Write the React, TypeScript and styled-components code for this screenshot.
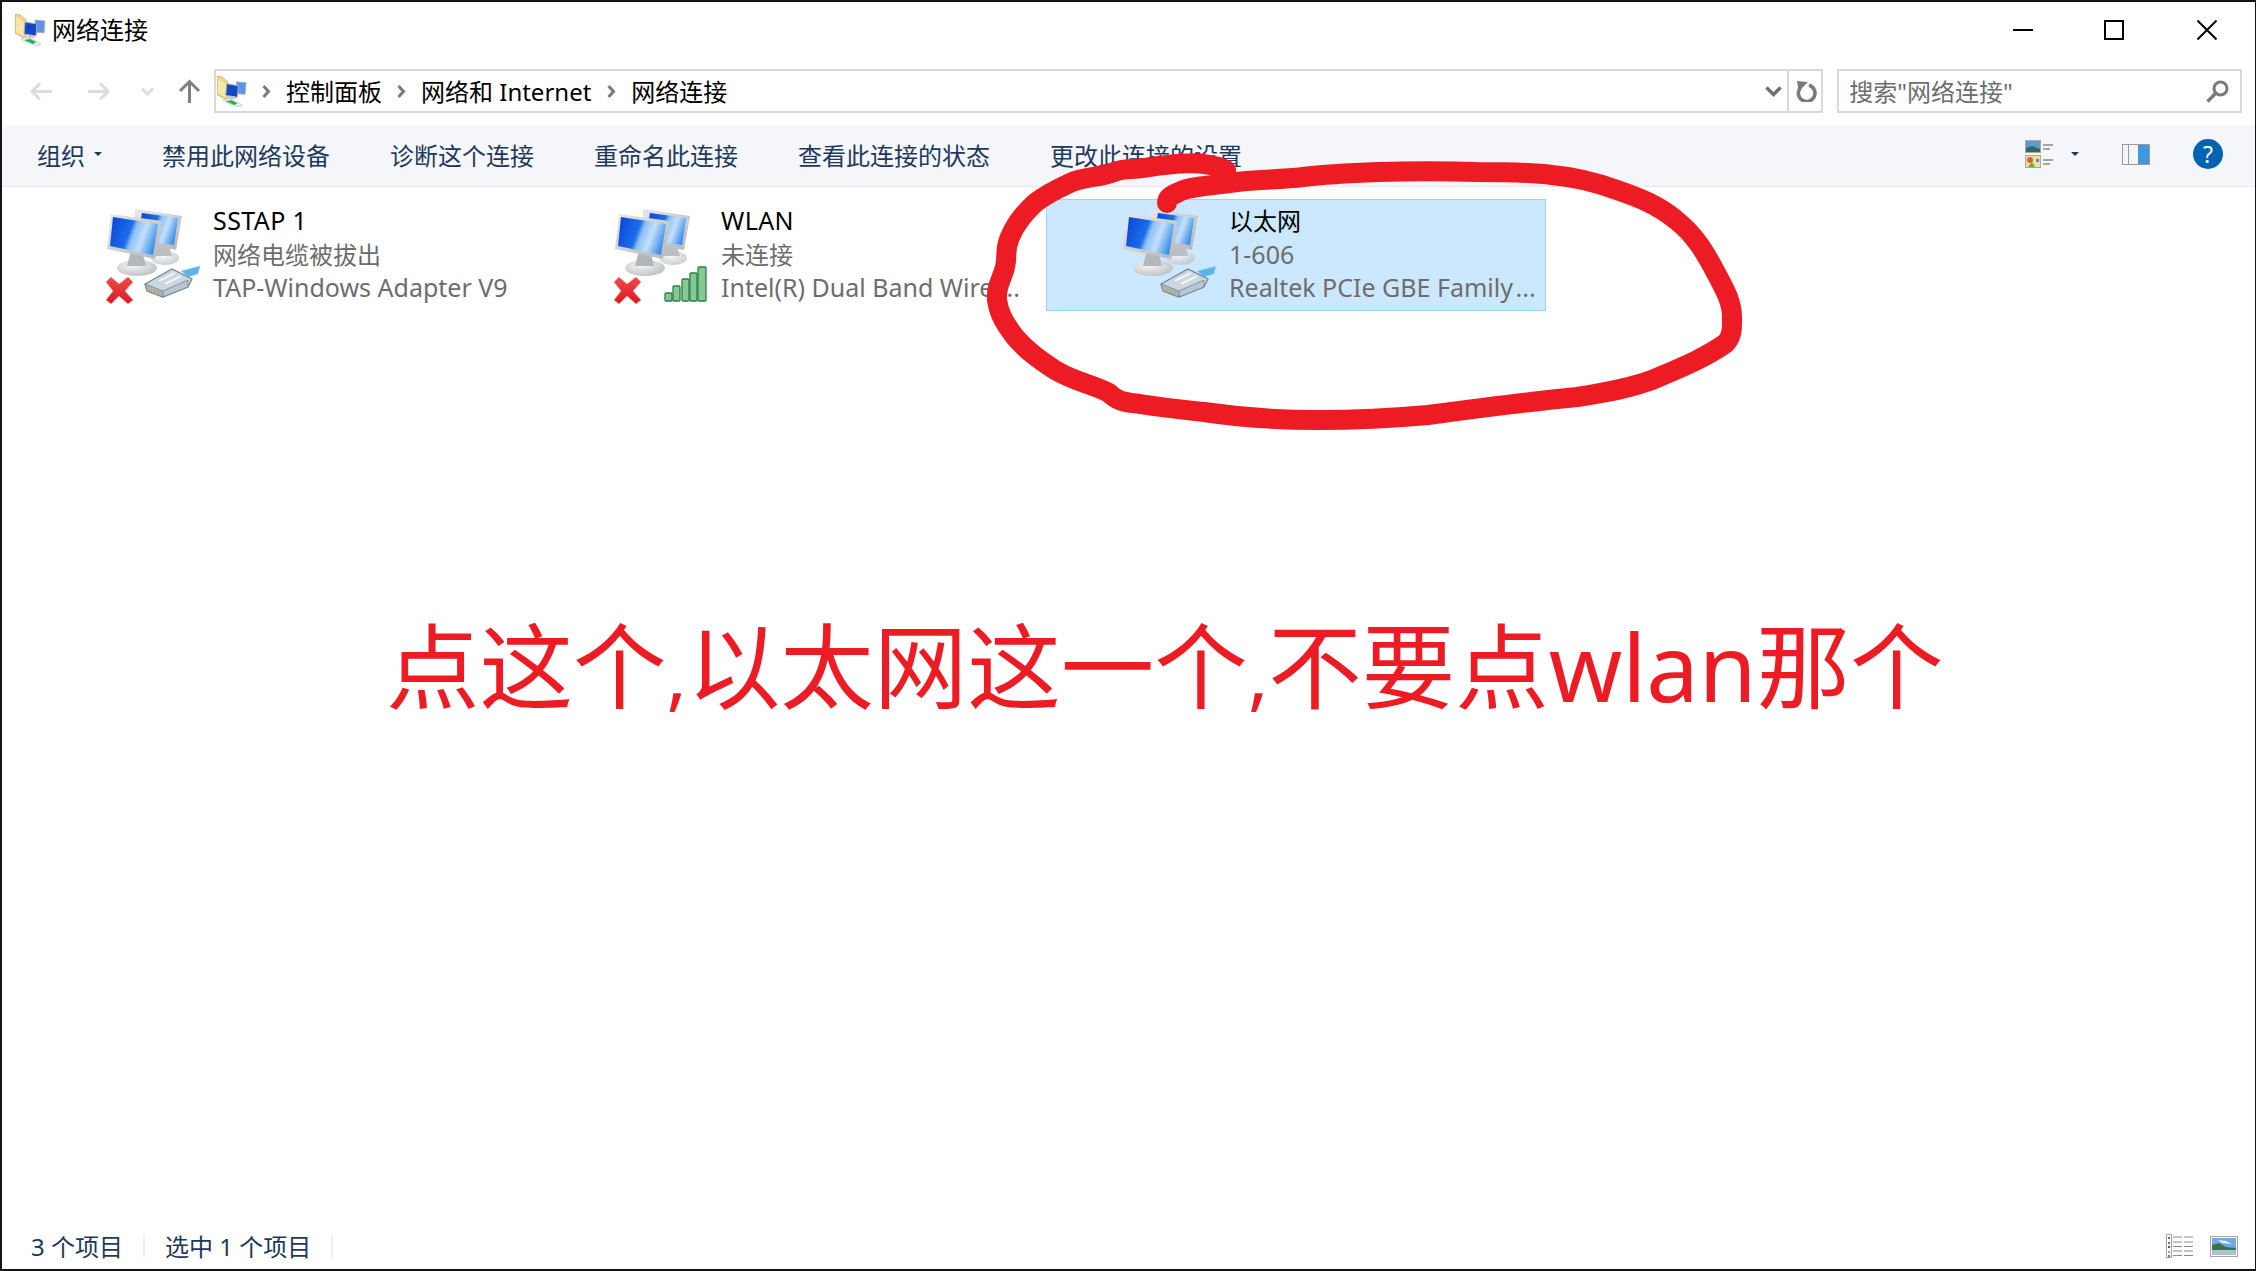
import { useId } from "react";
import styled, { createGlobalStyle } from "styled-components";

const GlobalStyle = createGlobalStyle`
	html, body {
		margin: 0;
		padding: 0;
		background: #fff;
		font-family: "Noto Sans", "Noto Sans CJK SC", sans-serif;
	}
`;

const Window = styled.div`
	position: relative;
	box-sizing: border-box;
	width: 2256px;
	height: 1271px;
	display: flex;
	flex-direction: column;
	overflow: hidden;
	background: #fff;
	border-style: solid;
	border-color: #141414;
	border-width: 2px 1px 2px 2px;
`;

const TitleBar = styled.div`
	box-sizing: border-box;
	height: 56px;
	display: flex;
	align-items: center;
	padding: 0 38px 0 13px;
`;

const WindowTitle = styled.span`
	margin: 0 0 3px 5px;
	font-size: 24px;
	color: #000;
	flex: 1;
`;

const WindowButton = styled.svg<{ $gap?: number }>`
	width: 20px;
	height: 20px;
	margin-left: ${(p) => p.$gap ?? 0}px;
	fill: none;
	stroke: #000;
	stroke-width: 2;
`;

const NavBar = styled.div`
	display: flex;
	align-items: center;
	height: 44px;
	padding: 0 13px 0 27px;
	margin: 11px 0 12px;
`;

const NavIcon = styled.svg<{ $w: number; $h: number; $gap: number }>`
	flex: none;
	width: ${(p) => p.$w}px;
	height: ${(p) => p.$h}px;
	margin-left: ${(p) => p.$gap}px;
`;

const AddressBox = styled.div`
	box-sizing: border-box;
	width: 1610px;
	margin-left: 13px;
	height: 44px;
	display: flex;
	align-items: center;
	padding-left: 1px;
	border: 2px solid #d9d9d9;
	font-size: 24px;
	color: #000;
`;

const Crumb = styled.span`
	white-space: nowrap;
	padding-bottom: 2px;
`;

const CrumbArrow = styled.svg<{ $gap: number }>`
	flex: none;
	width: 9px;
	height: 13px;
	margin: 0 15px 0 ${(p) => p.$gap}px;
`;

const AddressTools = styled.div`
	margin-left: auto;
	height: 100%;
	display: flex;
	align-items: center;
`;

const RefreshCell = styled.div`
	box-sizing: border-box;
	width: 34px;
	height: 100%;
	margin-left: 5px;
	padding-left: 3px;
	display: flex;
	align-items: center;
	justify-content: center;
	border-left: 2px solid #d9d9d9;
`;

const SearchBox = styled.div`
	box-sizing: border-box;
	width: 405px;
	height: 44px;
	margin-left: 14px;
	padding: 0 11px 0 10px;
	display: flex;
	align-items: center;
	justify-content: space-between;
	border: 2px solid #d9d9d9;
	font-size: 24px;
	color: #6d6d6d;
`;

const SearchHint = styled.span`
	padding-bottom: 2px;
`;

const Toolbar = styled.div`
	box-sizing: border-box;
	height: 62px;
	display: flex;
	align-items: center;
	gap: 60px;
	padding: 0 32px 3px 35px;
	background: #f4f6f9;
	border-bottom: 1px solid #e6e9ed;
	font-size: 24px;
	color: #1e395b;
`;

const ToolItem = styled.span`
	display: flex;
	align-items: center;
	white-space: nowrap;
`;

const Caret = styled.span<{ $gap: number }>`
	width: 0;
	height: 0;
	margin-left: ${(p) => p.$gap}px;
	border-left: 4px solid transparent;
	border-right: 4px solid transparent;
	border-top: 4px solid #1e395b;
`;

const ToolRight = styled.div`
	margin-left: auto;
	display: flex;
	align-items: center;
`;

const ViewIconBox = styled.svg`
	margin-left: 1px;
`;

const HelpButton = styled.div`
	width: 30px;
	height: 30px;
	margin-left: 43px;
	border-radius: 50%;
	background: #0063b1;
	color: #fff;
	font-size: 23px;
	line-height: 30px;
	text-align: center;
`;

const Content = styled.div`
	flex: 1;
	display: flex;
	gap: 8px;
	padding: 12px 0 0 28px;
	align-items: flex-start;
`;

const Adapter = styled.div<{ $selected?: boolean }>`
	box-sizing: border-box;
	width: 500px;
	height: 112px;
	display: flex;
	padding: 4px 12px 0 74px;
	background: ${(p) => (p.$selected ? "#cce8ff" : "transparent")};
	border: 1px solid ${(p) => (p.$selected ? "#99d1ff" : "transparent")};
`;

const AdapterIconBox = styled.svg`
	flex: none;
	width: 96px;
	height: 96px;
	margin-top: 4px;
`;

const AdapterText = styled.div`
	min-width: 0;
	flex: 1;
	margin-left: 12px;
	font-size: 24px;
	line-height: 33.5px;
	color: #6d6d6d;
`;

const AdapterName = styled.div<{ $latin?: boolean }>`
	color: #000;
	font-size: ${(p) => (p.$latin ? 25 : 24)}px;
	letter-spacing: ${(p) => (p.$latin ? 0.4 : 0)}px;
`;

const AdapterLine = styled.div<{ $latin?: boolean }>`
	font-size: ${(p) => (p.$latin ? 25 : 24)}px;
	white-space: nowrap;
`;

const StatusBar = styled.div`
	height: 46px;
	display: flex;
	align-items: center;
	padding: 0 17px 0 29px;
	font-size: 24px;
	color: #1e395b;
`;

const StatusText = styled.span`
	white-space: nowrap;
	padding-bottom: 2px;
`;

const StatusSep = styled.span`
	width: 2px;
	height: 23px;
	margin: 0 20px 0 20px;
	background: #f0f0f0;
`;

const StatusViews = styled.div`
	margin-left: auto;
	display: flex;
	align-items: center;
	gap: 17px;
`;

const ScribbleLayer = styled.svg`
	position: absolute;
	left: -2px;
	top: -2px;
	width: 2256px;
	height: 1271px;
	pointer-events: none;
`;

const Annotation = styled.div`
	position: absolute;
	left: 384px;
	top: 599px;
	font-size: 93.5px;
	line-height: 130px;
	color: #ed1c24;
	white-space: nowrap;
`;

const Comma = styled.span`
	font-size: 76px;
`;

const FolderNetIcon = ({ size }: { size: number }) => (
	<svg width={size} height={size} viewBox="0 0 32 32" style={{ flex: "none" }}>
		<path d="M0 0l5 1 6 5v19l-11-6z" fill="#f0d68a" stroke="#c8a850" strokeWidth="0.8" />
		<path d="M1 3l8 5v14l-8-4z" fill="#f8e7ac" />
		<path d="M20 6l10 1-1 12-9-1z" fill="#5a95e6" stroke="#a9b0b8" />
		<path d="M10 8l12 2-1 12-12-2z" fill="#1646c8" stroke="#a9b0b8" />
		<path d="M13 21h5l2 3h-8z" fill="#c8ccd0" />
		<path d="M6 25l6-2 9 4 5 3-3 2-10-3z" fill="#e6ecea" stroke="#b8c0bc" strokeWidth="0.6" />
		<path d="M9 26l6-1 6 3-3 2z" fill="#25b050" />
	</svg>
);

const MonitorPair = () => {
	const id = useId();
	return (
		<>
			<defs>
				<linearGradient id={id + "s"} x1="0" y1="0.2" x2="1" y2="0.5">
					<stop offset="0" stopColor="#0b48d6" />
					<stop offset="0.42" stopColor="#1c6eea" />
					<stop offset="0.52" stopColor="#8cc0f7" />
					<stop offset="0.72" stopColor="#c3e0fb" />
					<stop offset="1" stopColor="#3b8fea" />
				</linearGradient>
				<linearGradient id={id + "f"} x1="0" y1="0" x2="1" y2="1">
					<stop offset="0" stopColor="#e6e8ea" />
					<stop offset="1" stopColor="#b3b7bb" />
				</linearGradient>
				<radialGradient id={id + "b"} cx="0.4" cy="0.35" r="0.8">
					<stop offset="0" stopColor="#f6f6f6" />
					<stop offset="1" stopColor="#b6b8ba" />
				</radialGradient>
			</defs>
			<ellipse cx="60" cy="50" rx="14" ry="7" fill={`url(#${id}b)`} opacity="0.8" />
			<path d="M52 38h12l3 10H50z" fill="#bcbfc2" />
			<path d="M30 1l47 7-6 34-22-4-2-8-18-6z" fill={`url(#${id}f)`} />
			<path d="M37 5l36 5-4 27-20-3-2-7-13-5z" fill={`url(#${id}s)`} />
			<ellipse cx="32" cy="60" rx="20" ry="8" fill={`url(#${id}b)`} />
			<path d="M25 46h13l3 12H22z" fill="#b4b7ba" />
			<path d="M6 6l51 7-7 38-48-10z" fill={`url(#${id}f)`} />
			<path d="M8 9l45 7-5 31-43-9z" fill={`url(#${id}s)`} />
		</>
	);
};

const RedCross = () => {
	const id = useId();
	return (
		<>
			<defs>
				<linearGradient id={id} x1="0" y1="0" x2="0" y2="1">
					<stop offset="0" stopColor="#ef4a4a" />
					<stop offset="1" stopColor="#d81a20" />
				</linearGradient>
			</defs>
			<path
				d="M6 69l8 7 9-7 5 5-8 9 8 9-5 4-9-8-8 8-5-4 7-9-7-9z"
				fill={`url(#${id})`}
				stroke="#f2a0a0"
				strokeWidth="0.8"
			/>
		</>
	);
};

const PlugShape = () => (
	<>
		<path d="M76 63l19-5-2 8-10 3z" fill="#58b6e8" stroke="#a6d8f0" strokeWidth="0.8" />
		<path d="M40 76l27-15 20 10-4 8-25 10-16-6z" fill="#cad6e0" stroke="#748592" strokeWidth="1.2" />
		<path d="M40 76l18 7v6l-16-6z" fill="#a9b6c0" stroke="#748592" strokeWidth="0.8" />
		<path d="M58 83l25-11v7l-25 10z" fill="#b8c6d2" stroke="#748592" strokeWidth="0.8" />
		<path d="M45 81l1 3M49 82l1 3M53 83l1 3" stroke="#c9a93a" strokeWidth="1.6" />
		<path d="M54 73l16-8M60 76l16-8" stroke="#f0f5f8" strokeWidth="2.4" />
	</>
);

const SignalBars = () => (
	<g fill="#86c997" stroke="#2f7d46" strokeWidth="1.3">
		<rect x="52" y="85" width="7" height="8" rx="1" />
		<rect x="60" y="78" width="7" height="15" rx="1" />
		<rect x="69" y="71" width="7" height="22" rx="1" />
		<rect x="77" y="65" width="7" height="28" rx="1" />
		<rect x="85" y="59" width="8" height="34" rx="1" />
	</g>
);

const AdapterIcon = ({ cross, bars }: { cross?: boolean; bars?: boolean }) => (
	<AdapterIconBox viewBox="0 0 96 96">
		<MonitorPair />
		{bars ? <SignalBars /> : <PlugShape />}
		{cross && <RedCross />}
	</AdapterIconBox>
);

const ViewIcon = () => (
	<ViewIconBox width="28" height="28" viewBox="0 0 28 28">
		<rect x="0.5" y="0.5" width="15" height="12" fill="#5b9bd0" stroke="#a8a8a8" />
		<path d="M1 8l6-2 8 3v3H1z" fill="#2e6b58" />
		<rect x="0.5" y="15.5" width="15" height="12" fill="#e8e4a0" stroke="#a8a8a8" />
		<circle cx="5" cy="20" r="3" fill="#e0602a" />
		<path d="M3 27l4-5 3 5z" fill="#6aa84f" />
		<path d="M11 19h3v3h-3z" fill="#6a7fd0" />
		<path d="M18 5h10M18 9h7M18 20h10M18 24h7" stroke="#8a8a8a" strokeWidth="1.3" />
	</ViewIconBox>
);

const PaneIcon = () => (
	<svg width="28" height="21" viewBox="0 0 28 21" style={{ marginLeft: 43 }}>
		<rect x="0.5" y="0.5" width="27" height="20" fill="#f5f5f5" stroke="#9a9a9a" />
		<path d="M6.5 1v19" stroke="#9a9a9a" />
		<rect x="16" y="1" width="11" height="19" fill="#3f97e2" />
	</svg>
);

const DetailsIcon = () => (
	<svg width="27" height="24" viewBox="0 0 27 24">
		<rect x="0.5" y="0.5" width="5" height="23" fill="#fff" stroke="#a5a5a5" />
		<path d="M2 3h2v2H2z" fill="#4a7f9a" />
		<path d="M2 8h2v2H2z" fill="#5a72b0" />
		<path d="M2 12h2v2H2z" fill="#c02a20" />
		<path d="M2 17h2v2H2z" fill="#b8a860" />
		<path d="M2 21h2v2H2z" fill="#4a7f9a" />
		<path
			d="M7 3h9M18 3h9M7 8h9M18 8h9M7 12.5h9M18 12.5h9M7 17h9M18 17h9M7 21.5h9M18 21.5h9"
			stroke="#8a8a8a"
			strokeWidth="1.2"
		/>
	</svg>
);

const LargeIcon = () => (
	<svg width="28" height="21" viewBox="0 0 28 21">
		<rect x="0.5" y="0.5" width="27" height="20" fill="#fff" stroke="#a5a5a5" />
		<rect x="2" y="2" width="24" height="17" fill="#6fa9e6" />
		<path d="M2 9l7-2 7 4 10 1v3H2z" fill="#3f6f52" />
		<path d="M2 14h24v5H2z" fill="#a9c3d4" />
		<path d="M8 4l8 1 6 3-10-1z" fill="#e4f0fa" />
	</svg>
);

const ringPath =
	"M1226 170C1205 160 1175 163 1144 168C1130 170 1125 168 1114 172C1100 178 1085 176 1070 183C1055 190 1045 195 1035 203C1022 215 1015 225 1010 237C1004 250 1008 255 1005 267C1002 280 996 285 997 300C999 315 1006 325 1015 337C1028 352 1040 360 1055 370C1075 382 1095 385 1109 393C1118 402 1125 402 1140 404C1165 408 1185 410 1204 412C1245 418 1280 420 1318 420C1360 420 1395 418 1428 415C1480 408 1525 402 1577 397C1610 392 1630 388 1652 380C1680 368 1705 358 1726 343C1733 335 1732 326 1732 317C1732 302 1725 290 1716 273C1705 252 1695 235 1676 220C1658 205 1640 198 1617 190C1595 182 1575 177 1552 175C1530 172 1505 172 1477 172C1445 171 1410 171 1378 172C1352 173 1328 174 1303 177C1278 180 1255 179 1229 183C1210 186 1190 186 1179 192C1170 196 1167 198 1167 203";

export default function App() {
	return (
		<>
			<GlobalStyle />
			<Window>
				<TitleBar>
					<FolderNetIcon size={32} />
					<WindowTitle>网络连接</WindowTitle>
					<WindowButton viewBox="0 0 20 20">
						<path d="M0 10h20" />
					</WindowButton>
					<WindowButton viewBox="0 0 20 20" $gap={71}>
						<rect x="1" y="1" width="18" height="18" />
					</WindowButton>
					<WindowButton viewBox="0 0 20 20" $gap={73} strokeWidth={1.5}>
						<path d="M0.5 0.5l19 19M19.5 0.5l-19 19" />
					</WindowButton>
				</TitleBar>

				<NavBar>
					<NavIcon viewBox="0 0 23 19" $w={23} $h={19} $gap={0} fill="none" stroke="#dcdcdc" strokeWidth="3">
						<path d="M23 9.5H3M11 1.5l-8 8 8 8" />
					</NavIcon>
					<NavIcon viewBox="0 0 23 19" $w={23} $h={19} $gap={36} fill="none" stroke="#dcdcdc" strokeWidth="3">
						<path d="M0 9.5h20M12 1.5l8 8-8 8" />
					</NavIcon>
					<NavIcon viewBox="0 0 13 9" $w={13} $h={9} $gap={30} fill="none" stroke="#dcdcdc" strokeWidth="3">
						<path d="M1 1.5l5.5 5.5 5.5-5.5" />
					</NavIcon>
					<NavIcon viewBox="0 0 23 24" $w={23} $h={24} $gap={24} fill="none" stroke="#808080" strokeWidth="3">
						<path d="M11.5 24V3M2 12l9.5-9.5L21 12" />
					</NavIcon>
					<AddressBox>
						<FolderNetIcon size={31} />
						<CrumbArrow viewBox="0 0 9 13" $gap={14} fill="none" stroke="#7a7a7a" strokeWidth="3">
							<path d="M1.5 1l5 5.5-5 5.5" />
						</CrumbArrow>
						<Crumb>控制面板</Crumb>
						<CrumbArrow viewBox="0 0 9 13" $gap={15} fill="none" stroke="#7a7a7a" strokeWidth="3">
							<path d="M1.5 1l5 5.5-5 5.5" />
						</CrumbArrow>
						<Crumb>网络和 Internet</Crumb>
						<CrumbArrow viewBox="0 0 9 13" $gap={16} fill="none" stroke="#7a7a7a" strokeWidth="3">
							<path d="M1.5 1l5 5.5-5 5.5" />
						</CrumbArrow>
						<Crumb>网络连接</Crumb>
						<AddressTools>
							<svg width="17" height="11" viewBox="0 0 17 11" fill="none" stroke="#707070" strokeWidth="3.4">
								<path d="M1.5 1.5l7 7 7-7" />
							</svg>
							<RefreshCell>
								<svg width="21" height="22" viewBox="0 0 21 22">
									<path d="M13 5.2A8.3 8.3 0 1 1 4.6 7.5" fill="none" stroke="#7a7a7a" strokeWidth="3.6" />
									<path d="M1 1l11 1-9.5 9.5z" fill="#7a7a7a" />
								</svg>
							</RefreshCell>
						</AddressTools>
					</AddressBox>
					<SearchBox>
						<SearchHint>搜索"网络连接"</SearchHint>
						<svg width="23" height="23" viewBox="0 0 23 23" fill="none" stroke="#7a7a7a">
							<circle cx="14.5" cy="8.5" r="6.5" strokeWidth="3" />
							<path d="M9.5 13.5L1.5 21.5" strokeWidth="3.6" />
						</svg>
					</SearchBox>
				</NavBar>

				<Toolbar>
					<ToolItem>
						组织
						<Caret $gap={9} />
					</ToolItem>
					<ToolItem>禁用此网络设备</ToolItem>
					<ToolItem>诊断这个连接</ToolItem>
					<ToolItem>重命名此连接</ToolItem>
					<ToolItem>查看此连接的状态</ToolItem>
					<ToolItem>更改此连接的设置</ToolItem>
					<ToolRight>
						<ViewIcon />
						<Caret $gap={18} />
						<PaneIcon />
						<HelpButton>?</HelpButton>
					</ToolRight>
				</Toolbar>

				<Content>
					<Adapter>
						<AdapterIcon cross />
						<AdapterText>
							<AdapterName $latin>SSTAP 1</AdapterName>
							<AdapterLine>网络电缆被拔出</AdapterLine>
							<AdapterLine $latin>TAP-Windows Adapter V9</AdapterLine>
						</AdapterText>
					</Adapter>
					<Adapter>
						<AdapterIcon cross bars />
						<AdapterText>
							<AdapterName $latin>WLAN</AdapterName>
							<AdapterLine>未连接</AdapterLine>
							<AdapterLine $latin>Intel(R) Dual Band Wirel...</AdapterLine>
						</AdapterText>
					</Adapter>
					<Adapter $selected>
						<AdapterIcon />
						<AdapterText>
							<AdapterName>以太网</AdapterName>
							<AdapterLine $latin>1-606</AdapterLine>
							<AdapterLine $latin>Realtek PCIe GBE Family&#8202;...</AdapterLine>
						</AdapterText>
					</Adapter>
				</Content>

				<StatusBar>
					<StatusText>3 个项目</StatusText>
					<StatusSep />
					<StatusText>选中 1 个项目</StatusText>
					<StatusSep />
					<StatusViews>
						<DetailsIcon />
						<LargeIcon />
					</StatusViews>
				</StatusBar>

				<ScribbleLayer viewBox="0 0 2256 1271">
					<path d={ringPath} fill="none" stroke="#ed1c24" strokeWidth="20" strokeLinecap="round" strokeLinejoin="round" />
				</ScribbleLayer>
				<Annotation>
					点这个<Comma>,</Comma>以太网这一个<Comma>,</Comma>不要点wlan那个
				</Annotation>
			</Window>
		</>
	);
}
